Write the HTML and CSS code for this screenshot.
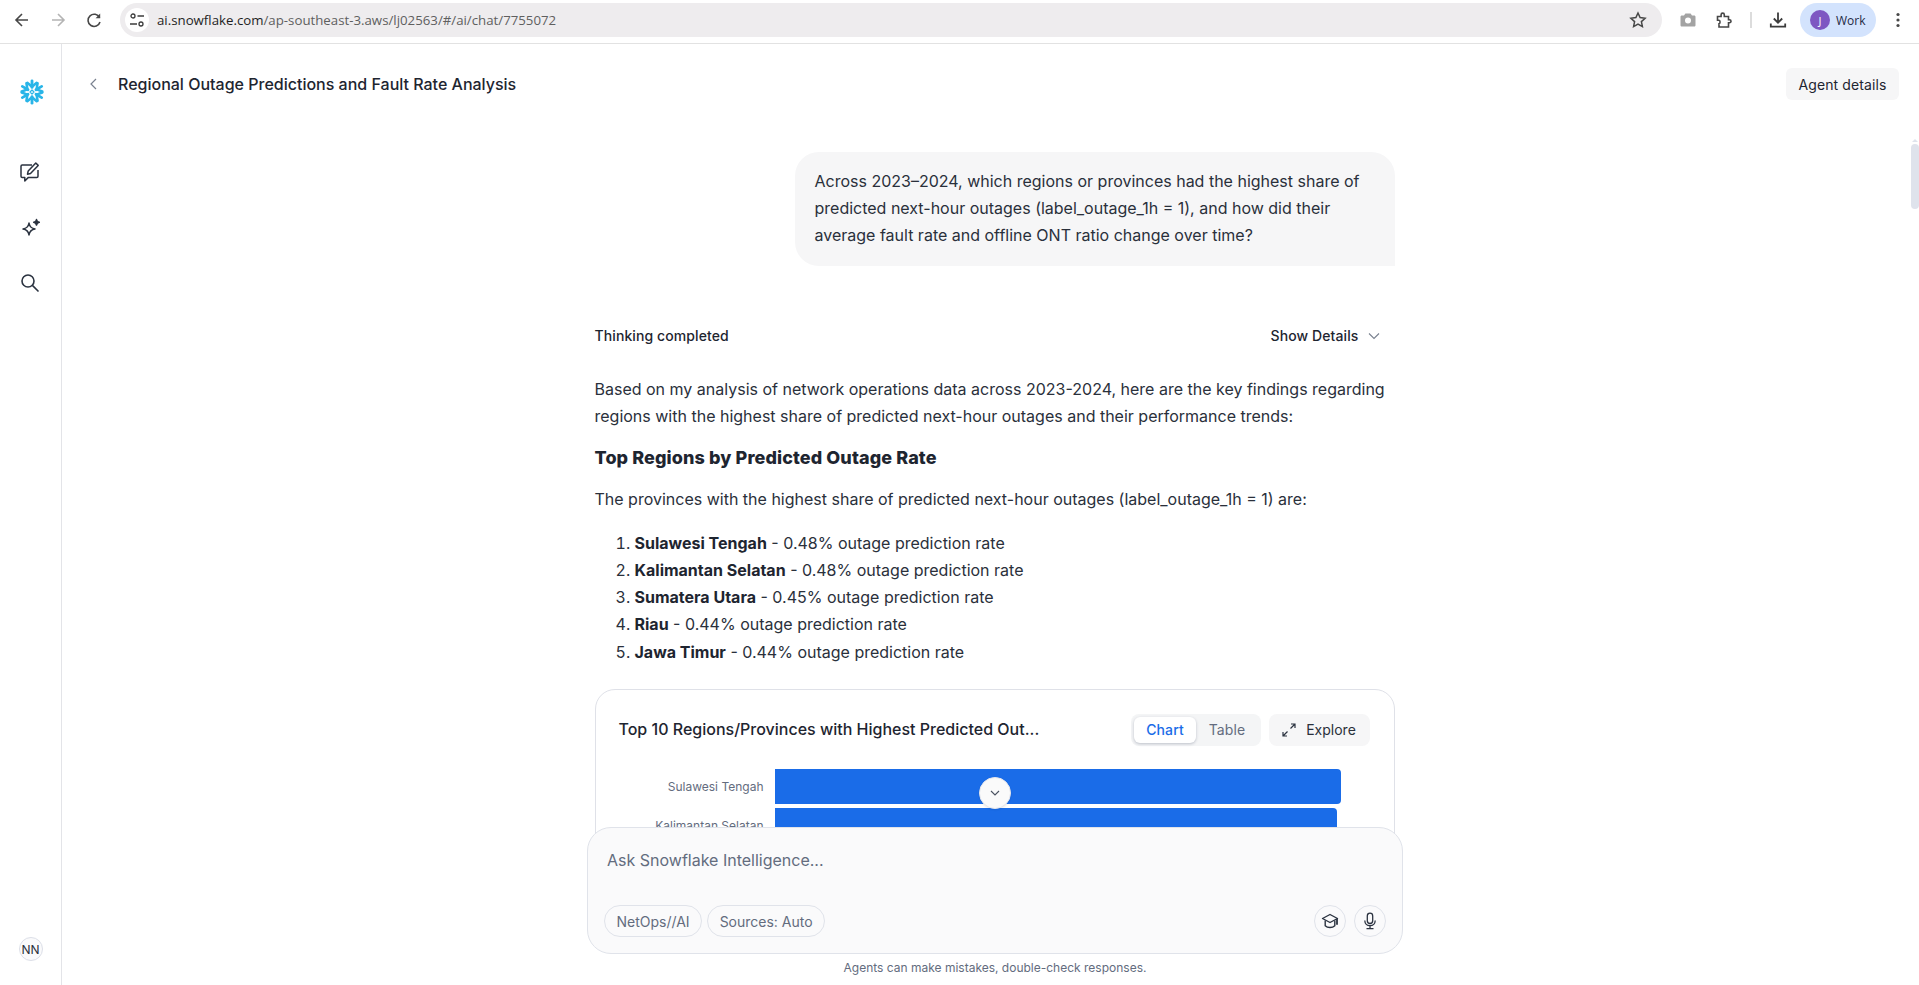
FILE: index.html
```html
<!DOCTYPE html>
<html lang="en">
<head>
  <meta charset="UTF-8">
  <meta name="viewport" content="width=device-width, initial-scale=1.0">
  <title>Regional Outage Predictions and Fault Rate Analysis</title>
  <link rel="stylesheet" href="styles.css">
</head>
<body>
  <!-- Browser toolbar -->
  <div class="browser-bar">
    <button class="tool-btn">
      <svg width="18" height="18" viewBox="0 0 18 18" fill="none" stroke="#474747" stroke-width="1.6"><path d="M15 9H3.5M9 3 3 9l6 6"/></svg>
    </button>
    <button class="tool-btn">
      <svg width="18" height="18" viewBox="0 0 18 18" fill="none" stroke="#b4b4b4" stroke-width="1.6"><path d="M3 9h11.5M9 3l6 6-6 6"/></svg>
    </button>
    <button class="tool-btn">
      <svg width="18" height="18" viewBox="0 0 18 18" fill="none" stroke="#474747" stroke-width="1.6"><path d="M14.6 6.6A6.1 6.1 0 1 0 15 11"/><path d="M15.2 2.6v4.6h-4.6" fill="#474747" stroke="none"/></svg>
    </button>
    <div class="url-bar">
      <span class="site-icon">
        <svg width="16" height="16" viewBox="0 0 16 16" fill="none" stroke="#3c3c3c" stroke-width="1.3"><circle cx="4" cy="4" r="2"/><path d="M8.5 4H15M1 12h7"/><circle cx="12" cy="12" r="2"/></svg>
      </span>
      <span class="url-text">ai.snowflake.com<span class="url-path">/ap-southeast-3.aws/lj02563/#/ai/chat/7755072</span></span>
      <svg class="url-star" width="18" height="18" viewBox="0 0 18 18" fill="none" stroke="#474747" stroke-width="1.5"><path d="m9 2 2.1 4.6 5 .6-3.7 3.4 1 5L9 13.1l-4.4 2.5 1-5-3.7-3.4 5-.6z"/></svg>
    </div>
    <button class="tool-btn tool-first">
      <svg width="16" height="16" viewBox="0 0 16 16"><path fill="#a3a3a3" fill-rule="evenodd" d="M5.4 1.5h5.2L12 3.4h2.2c.7 0 1.3.6 1.3 1.3v8.5c0 .7-.6 1.3-1.3 1.3H1.8c-.7 0-1.3-.6-1.3-1.3V4.700c0-.7.6-1.300 1.300-1.300H4zM8 5.500a3 3 0 1 0 0 6 3 3 0 0 0 0-6z"/></svg>
    </button>
    <button class="tool-btn">
      <svg width="18" height="18" viewBox="0 0 18 18" fill="none" stroke="#474747" stroke-width="1.6"><path d="M2.500 5.500h3.600V3.700a1.600 1.600 0 0 1 3.200 0v1.800h4.200v3.200h1a1.500 1.500 0 0 1 0 3h-1v4.300H4v-3.200c1.400-.2 1.400-3.300 0-3.500H2.500z"/></svg>
    </button>
    <span class="tool-sep"></span>
    <button class="tool-btn">
      <svg width="18" height="18" viewBox="0 0 18 18" fill="none" stroke="#3c3c3c" stroke-width="1.800"><path d="M9 1.500v10M4.800 7.500 9 11.700l4.200-4.200M1.800 12.500v3.200h14.400v-3.200"/></svg>
    </button>
    <div class="profile-pill">
      <span class="profile-avatar">J</span>
      <span>Work</span>
    </div>
    <button class="tool-btn">
      <svg width="18" height="18" viewBox="0 0 18 18" fill="#474747"><circle cx="9" cy="3.500" r="1.600"/><circle cx="9" cy="9" r="1.600"/><circle cx="9" cy="14.500" r="1.600"/></svg>
    </button>
  </div>

  <div class="app">
    <!-- Left rail -->
    <nav class="sidebar">
      <svg class="logo" width="26" height="26" viewBox="0 0 26 26" fill="none" stroke="#29b5e8" stroke-width="2.800" stroke-linecap="round" stroke-linejoin="round">
        <defs>
          <g id="flake-arm"><path d="M13 8.400V1.800"/><path d="M8.300 3.800 13 7.800l4.700-4" stroke-width="2.500"/></g>
        </defs>
        <use href="#flake-arm"/>
        <use href="#flake-arm" transform="rotate(60 13 13)"/>
        <use href="#flake-arm" transform="rotate(120 13 13)"/>
        <use href="#flake-arm" transform="rotate(180 13 13)"/>
        <use href="#flake-arm" transform="rotate(240 13 13)"/>
        <use href="#flake-arm" transform="rotate(300 13 13)"/>
        <path d="m13 11 2 2-2 2-2-2z" stroke-width="1.200"/>
      </svg>
      <svg class="rail-icon" width="22" height="22" viewBox="1 0 22 22" fill="none" stroke="#2b3340" stroke-width="1.500" stroke-linejoin="round">
        <path d="M13 4H3.200C2.500 4 2 4.500 2 5.200v10C2 15.900 2.500 16.400 3.200 16.400h2.600v3.600l3.600-3.600h8.400c.7 0 1.200-.5 1.200-1.200V9"/>
        <path d="M8.500 13.200l.7-3.200L16.800 2l2.400 2.400-7.700 8.200z"/>
      </svg>
      <svg class="rail-icon" width="22" height="22" viewBox="0 0 22 22" fill="none" stroke="#2b3340" stroke-width="1.500" stroke-linejoin="round">
        <path d="M9 6c.6 3.800 2.200 5.400 6 6-3.800.6-5.400 2.200-6 6-.6-3.800-2.200-5.400-6-6 3.800-.6 5.400-2.200 6-6z"/>
        <path d="M16.500 2.500c.3 1.800 1 2.500 2.800 2.800-1.800.3-2.500 1-2.800 2.800-.3-1.800-1-2.500-2.800-2.800 1.800-.3 2.500-1 2.800-2.800z" fill="#2b3340"/>
      </svg>
      <svg class="rail-icon" width="22" height="22" viewBox="0 0 22 22" fill="none" stroke="#2b3340" stroke-width="1.600">
        <circle cx="8" cy="8" r="6"/><path d="m12.400 12.400 6.100 6.100"/>
      </svg>
      <div class="user-badge">NN</div>
    </nav>

    <main class="main">
      <header class="page-header">
        <svg class="back-icon" width="14" height="14" viewBox="0 0 14 14" fill="none" stroke="#79818f" stroke-width="1.200"><path d="M9 2 4 7l5 5"/></svg>
        <h1 class="page-title">Regional Outage Predictions and Fault Rate Analysis</h1>
        <button class="agent-btn">Agent details</button>
      </header>

      <div class="chat">
        <div class="thread">
          <div class="user-msg">Across 2023–2024, which regions or provinces had the highest share of predicted next-hour outages (label_outage_1h = 1), and how did their average fault rate and offline ONT ratio change over time?</div>

          <div class="thinking-row">
            <span>Thinking completed</span>
            <span class="show-details">Show Details
              <svg width="14" height="14" viewBox="0 0 14 14" fill="none" stroke="#79818f" stroke-width="1.100"><path d="m2 4.500 5 5 5-5"/></svg>
            </span>
          </div>

          <p class="answer-intro">Based on my analysis of network operations data across 2023-2024, here are the key findings regarding regions with the highest share of predicted next-hour outages and their performance trends:</p>
          <h3 class="answer-heading">Top Regions by Predicted Outage Rate</h3>
          <p class="answer-text">The provinces with the highest share of predicted next-hour outages (label_outage_1h = 1) are:</p>
          <ol class="answer-list">
            <li><b>Sulawesi Tengah</b> - 0.48% outage prediction rate</li>
            <li><b>Kalimantan Selatan</b> - 0.48% outage prediction rate</li>
            <li><b>Sumatera Utara</b> - 0.45% outage prediction rate</li>
            <li><b>Riau</b> - 0.44% outage prediction rate</li>
            <li><b>Jawa Timur</b> - 0.44% outage prediction rate</li>
          </ol>

          <section class="chart-card">
            <div class="chart-head">
              <h4 class="chart-title">Top 10 Regions/Provinces with Highest Predicted Out...</h4>
              <div class="segment">
                <span class="segment-item active">Chart</span>
                <span class="segment-item">Table</span>
              </div>
              <button class="explore-btn">
                <svg width="14" height="14" viewBox="0 0 14 14" fill="none" stroke="#2b3340" stroke-width="1.200"><path d="M8.500 5.500 13 1M9 1h4v4M5.500 8.500 1 13M1 9v4h4"/></svg>
                Explore
              </button>
            </div>
            <div class="bars">
              <div class="bar-row">
                <span class="bar-label">Sulawesi Tengah</span>
                <span class="bar" style="width: 566px"></span>
              </div>
              <div class="bar-row">
                <span class="bar-label">Kalimantan Selatan</span>
                <span class="bar" style="width: 562px"></span>
              </div>
            </div>
          </section>
        </div>
      </div>

      <button class="scroll-down">
        <svg width="12" height="12" viewBox="0 0 12 12" fill="none" stroke="#4a5260" stroke-width="1.100"><path d="m2 4 4 4 4-4"/></svg>
      </button>

      <div class="scrollbar-arrow"></div>
      <div class="scrollbar-thumb"></div>

      <div class="composer-dock">
        <div class="composer">
          <div class="composer-input">Ask Snowflake Intelligence...</div>
          <div class="composer-actions">
            <span class="pill">NetOps//AI</span>
            <span class="pill">Sources: Auto</span>
            <span class="round-btn round-first">
              <svg width="18" height="18" viewBox="0 0 18 18" fill="none" stroke="#2b3340" stroke-width="1.400" stroke-linejoin="round"><path d="M9 2.500 1.500 6.500 9 10.500l7.500-4z"/><path d="M4.200 8.500v5.200c1.300 1.300 3 1.800 4.800 1.800s3.500-.5 4.800-1.800V8.500"/><path d="M16 6.800v6" stroke-width="1.800"/></svg>
            </span>
            <span class="round-btn">
              <svg width="18" height="18" viewBox="0 0 18 18" fill="none" stroke="#2b3340" stroke-width="1.300"><rect x="6.300" y="1.200" width="5.400" height="10.300" rx="2.700"/><path d="M3.800 8.500c0 3 2.200 5.200 5.200 5.200s5.200-2.200 5.200-5.200M9 13.700v2.800M5.500 16.700h7"/></svg>
            </span>
          </div>
        </div>
        <div class="composer-note">Agents can make mistakes, double-check responses.</div>
      </div>
    </main>
  </div>
</body>
</html>
```

FILE: styles.css
```css
* {
  box-sizing: border-box;
}
html, body {
  height: 100%;
}
body {
  margin: 0;
  height: 985px;
  overflow: hidden;
  display: flex;
  flex-direction: column;
  background-color: #fff;
  color: #2a303b;
  font-family: Inter, "Liberation Sans", sans-serif;
  font-size: 16px;
}
button {
  font: inherit;
  color: inherit;
  border: 0;
  background: none;
  padding: 0;
}

/* browser toolbar */
.browser-bar {
  height: 44px;
  flex: none;
  display: flex;
  align-items: center;
  padding: 0 3px 3px 4px;
  border-bottom: 1px solid #e2e2e2;
}
.tool-btn {
  width: 36px;
  height: 36px;
  flex: none;
  display: flex;
  align-items: center;
  justify-content: center;
}
.tool-first {
  margin-left: 8px;
}
.tool-sep {
  width: 2px;
  height: 16px;
  margin: 0 8px;
  background-color: #dcdcdc;
}
.url-bar {
  flex: 1;
  height: 34px;
  margin-left: 8px;
  padding: 0 15px 0 5px;
  display: flex;
  align-items: center;
  border-radius: 17px;
  background-color: #eeecee;
}
.site-icon {
  width: 24px;
  height: 24px;
  margin-right: 8px;
  display: flex;
  align-items: center;
  justify-content: center;
  border-radius: 50%;
  background-color: #fff;
}
.url-text {
  font-family: "Open Sans", sans-serif;
  font-size: 13.25px;
  color: #1f1f1f;
}
.url-path {
  color: #5f5f5f;
}
.url-star {
  margin-left: auto;
}
.profile-pill {
  width: 76px;
  height: 34px;
  margin: 0 4px;
  padding-left: 10px;
  display: flex;
  align-items: center;
  gap: 6px;
  border-radius: 17px;
  background-color: #d3e3fd;
  color: #1f2a44;
  font-family: "Open Sans", sans-serif;
  font-size: 12px;
}
.profile-avatar {
  width: 20px;
  height: 20px;
  display: flex;
  align-items: center;
  justify-content: center;
  border-radius: 50%;
  background-color: #7e57c2;
  color: #fff;
  font-size: 11px;
}

/* app shell */
.app {
  flex: 1;
  min-height: 0;
  display: flex;
}
.sidebar {
  width: 62px;
  flex: none;
  display: flex;
  flex-direction: column;
  align-items: center;
  padding: 35px 0 24px;
  border-right: 1px solid #e3e4e8;
}
.logo {
  margin-left: 3px;
  margin-bottom: 56px;
}
.rail-icon {
  margin-bottom: 34px;
}
.user-badge {
  width: 24px;
  height: 24px;
  margin-top: auto;
  display: flex;
  align-items: center;
  justify-content: center;
  border: 1px solid #dcdfe8;
  border-radius: 50%;
  background-color: #fafafb;
  font-size: 12px;
  color: #2a303b;
}
.main {
  flex: 1;
  min-width: 0;
  position: relative;
  overflow: hidden;
  display: flex;
  flex-direction: column;
}
.page-header {
  height: 80px;
  flex: none;
  display: flex;
  align-items: center;
  padding: 0 20px 0 25px;
}
.back-icon {
  margin-right: 17px;
}
.page-title {
  margin: 0;
  font-size: 16px;
  font-weight: 500;
  color: #1e2530;
}
.agent-btn {
  height: 32px;
  width: 113px;
  margin-left: auto;
  border-radius: 6px;
  background-color: #f6f6f7;
  font-size: 14px;
  letter-spacing: .1px;
  color: #1e2530;
}

/* conversation */
.chat {
  flex: 1;
  min-height: 0;
  overflow: hidden;
  display: flex;
  justify-content: center;
  padding: 28px 0 0 8px;
}
.thread {
  width: 800px;
  display: flex;
  flex-direction: column;
  line-height: 27.2px;
}
.user-msg {
  align-self: flex-end;
  width: 600px;
  height: 114px;
  padding: 16px 20px;
  border-radius: 24px 24px 0 24px;
  background-color: #f6f6f7;
}
.thinking-row {
  height: 20px;
  margin-top: 60px;
  padding-right: 14px;
  display: flex;
  align-items: center;
  justify-content: space-between;
  font-size: 14px;
  font-weight: 500;
  letter-spacing: .1px;
  color: #1e2530;
}
.show-details {
  display: flex;
  align-items: center;
  gap: 8px;
}
.answer-intro {
  margin: 30px 0 0;
}
.answer-heading {
  margin: 14px 0 0;
  font-size: 18px;
  font-weight: 800;
  letter-spacing: .1px;
  color: #1e2530;
}
.answer-text {
  margin: 14px 0 0;
}
.answer-list {
  margin: 17px 0 0;
  padding-left: 40px;
}
.answer-list b {
  font-weight: 700;
  color: #1e2530;
}
.chart-card {
  margin-top: 23px;
  padding: 24px 24px 20px 23px;
  border: 1px solid #dfe1e8;
  border-radius: 20px;
}
.chart-head {
  height: 32px;
  display: flex;
  align-items: center;
}
.chart-title {
  margin: 0;
  flex: 1;
  font-size: 16px;
  font-weight: 500;
  color: #1e2530;
}
.segment {
  height: 32px;
  padding: 3px;
  display: flex;
  border-radius: 8px;
  background-color: #f4f5f6;
  font-size: 14px;
  letter-spacing: .1px;
  line-height: 26px;
}
.segment-item {
  width: 62px;
  padding-left: 1px;
  text-align: center;
  color: #636c7e;
}
.segment-item.active {
  border-radius: 6px;
  background-color: #fff;
  box-shadow: 0 1px 3px rgba(60, 70, 100, .3);
  color: #1a6ce8;
  font-weight: 500;
}
.explore-btn {
  width: 101px;
  height: 32px;
  margin-left: 8px;
  display: flex;
  align-items: center;
  justify-content: center;
  gap: 10px;
  border-radius: 8px;
  background-color: #f6f6f7;
  font-size: 14px;
}
.bars {
  margin-top: 23px;
  display: flex;
  flex-direction: column;
  gap: 4px;
}
.bar-row {
  height: 35px;
  display: flex;
  align-items: center;
  gap: 11px;
}
.bar-label {
  width: 145px;
  text-align: right;
  font-size: 12px;
  color: #636c7e;
}
.bar {
  height: 35px;
  border-radius: 0 4px 4px 0;
  background-color: #1a6ce8;
}

/* overlays */
.scroll-down {
  position: absolute;
  left: 917px;
  top: 733px;
  width: 32px;
  height: 32px;
  display: flex;
  align-items: center;
  justify-content: center;
  border: 1px solid #e6e7ec;
  border-radius: 50%;
  background-color: #fafafa;
  box-shadow: 0 1px 2px rgba(0, 0, 0, .08);
}
.scrollbar-thumb {
  position: absolute;
  right: 0;
  top: 100px;
  width: 8px;
  height: 65px;
  border-radius: 4px;
  background-color: #dfe3ec;
}
.scrollbar-arrow {
  position: absolute;
  right: 1px;
  top: 92px;
  border: 3px solid transparent;
  border-bottom: 3px solid #dfe3ec;
}
.composer-dock {
  position: absolute;
  left: 9px;
  right: 0;
  bottom: 0;
  display: flex;
  flex-direction: column;
  align-items: center;
  background: linear-gradient(transparent 40px, #fff 40px);
}
.composer {
  width: 816px;
  height: 127px;
  padding: 0 16px 16px;
  display: flex;
  flex-direction: column;
  border: 1px solid #e0e3ea;
  border-radius: 24px;
  background-color: #fafafb;
}
.composer-input {
  padding: 20px 3px 0;
  line-height: 24px;
  color: #636c7e;
}
.composer-actions {
  margin-top: auto;
  display: flex;
  gap: 5px;
}
.pill {
  height: 32px;
  padding: 0 11.5px;
  display: flex;
  align-items: center;
  border: 1px solid #e0e3ea;
  border-radius: 16px;
  font-size: 14px;
  color: #636c7e;
}
.round-btn {
  width: 32px;
  height: 32px;
  display: flex;
  align-items: center;
  justify-content: center;
  border: 1px solid #e0e3ea;
  border-radius: 50%;
}
.round-btn + .round-btn {
  margin-left: 3px;
}
.round-first {
  margin-left: auto;
}
.composer-note {
  height: 16px;
  margin: 6px 0 9px;
  font-size: 12px;
  line-height: 16px;
  color: #636c7e;
}
```
